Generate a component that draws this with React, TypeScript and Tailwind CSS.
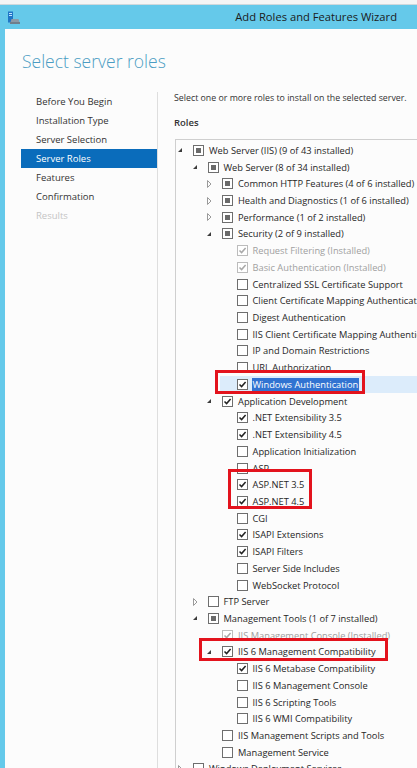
import React from 'react';

type Row = {
  t: string;
  l: number;
  e?: 'o' | 'c';
  s: 'i' | 'c' | 'd' | 'u';
  hl?: boolean;
};

const rows: Row[] = [
  { t: 'Web Server (IIS) (9 of 43 installed)', l: 0, e: 'o', s: 'i' },
  { t: 'Web Server (8 of 34 installed)', l: 1, e: 'o', s: 'i' },
  { t: 'Common HTTP Features (4 of 6 installed)', l: 2, e: 'c', s: 'i' },
  { t: 'Health and Diagnostics (1 of 6 installed)', l: 2, e: 'c', s: 'i' },
  { t: 'Performance (1 of 2 installed)', l: 2, e: 'c', s: 'i' },
  { t: 'Security (2 of 9 installed)', l: 2, e: 'o', s: 'i' },
  { t: 'Request Filtering (Installed)', l: 3, s: 'd' },
  { t: 'Basic Authentication (Installed)', l: 3, s: 'd' },
  { t: 'Centralized SSL Certificate Support', l: 3, s: 'u' },
  { t: 'Client Certificate Mapping Authentication', l: 3, s: 'u' },
  { t: 'Digest Authentication', l: 3, s: 'u' },
  { t: 'IIS Client Certificate Mapping Authentication', l: 3, s: 'u' },
  { t: 'IP and Domain Restrictions', l: 3, s: 'u' },
  { t: 'URL Authorization', l: 3, s: 'u' },
  { t: 'Windows Authentication', l: 3, s: 'c', hl: true },
  { t: 'Application Development', l: 2, e: 'o', s: 'c' },
  { t: '.NET Extensibility 3.5', l: 3, s: 'c' },
  { t: '.NET Extensibility 4.5', l: 3, s: 'c' },
  { t: 'Application Initialization', l: 3, s: 'u' },
  { t: 'ASP', l: 3, s: 'u' },
  { t: 'ASP.NET 3.5', l: 3, s: 'c' },
  { t: 'ASP.NET 4.5', l: 3, s: 'c' },
  { t: 'CGI', l: 3, s: 'u' },
  { t: 'ISAPI Extensions', l: 3, s: 'c' },
  { t: 'ISAPI Filters', l: 3, s: 'c' },
  { t: 'Server Side Includes', l: 3, s: 'u' },
  { t: 'WebSocket Protocol', l: 3, s: 'u' },
  { t: 'FTP Server', l: 1, e: 'c', s: 'u' },
  { t: 'Management Tools (1 of 7 installed)', l: 1, e: 'o', s: 'i' },
  { t: 'IIS Management Console (Installed)', l: 2, s: 'd' },
  { t: 'IIS 6 Management Compatibility', l: 2, e: 'o', s: 'c' },
  { t: 'IIS 6 Metabase Compatibility', l: 3, s: 'c' },
  { t: 'IIS 6 Management Console', l: 3, s: 'u' },
  { t: 'IIS 6 Scripting Tools', l: 3, s: 'u' },
  { t: 'IIS 6 WMI Compatibility', l: 3, s: 'u' },
  { t: 'IIS Management Scripts and Tools', l: 2, s: 'u' },
  { t: 'Management Service', l: 2, s: 'u' },
  { t: 'Windows Deployment Services', l: 0, e: 'c', s: 'u' },
];

const nav = [
  'Before You Begin',
  'Installation Type',
  'Server Selection',
  'Server Roles',
  'Features',
  'Confirmation',
  'Results',
];

function Expander({ e }: { e?: 'o' | 'c' }) {
  return (
    <div className="w-[13px] h-full flex items-center pl-[1px] shrink-0">
      {e === 'o' && (
        <svg width="6" height="6" viewBox="0 0 6 6">
          <path d="M5 1 L5 5 L1 5 Z" fill="#3c3c3c" />
        </svg>
      )}
      {e === 'c' && (
        <svg width="6" height="8" viewBox="0 0 6 8">
          <path d="M1.5 0.5 L5 4 L1.5 7.5 Z" fill="none" stroke="#9a9a9a" strokeWidth="1" />
        </svg>
      )}
    </div>
  );
}

function Check({ s }: { s: Row['s'] }) {
  const dis = s === 'd';
  return (
    <div
      className={
        'w-[11px] h-[11px] border bg-white flex items-center justify-center shrink-0 ' +
        (dis ? 'border-[#bcbcbc]' : 'border-[#6e6e6e]')
      }
    >
      {s === 'i' && <div className="w-[5px] h-[5px] bg-[#6a6a6a]" />}
      {(s === 'c' || s === 'd') && (
        <svg width="9" height="9" viewBox="0 0 9 9">
          <path
            d="M1.5 4.5 L3.6 6.6 L7.6 2"
            fill="none"
            stroke={dis ? '#a8a8a8' : '#222'}
            strokeWidth="1.5"
          />
        </svg>
      )}
    </div>
  );
}

export default function App() {
  return (
    <div
      className="relative w-[417px] h-[768px] overflow-hidden bg-[#f3f3f3] text-[#262626]"
      style={{ fontFamily: '"Segoe UI", "Open Sans", sans-serif' }}
    >
      {/* strip above the window */}
      <div className="h-[5px] border-b border-[#cfd8dc] bg-[#f5f5f5]" />

      <div className="flex flex-col h-[763px] bg-[#65c9ea] pl-[5px]">
        {/* title bar */}
        <div className="h-[24px] flex items-center shrink-0">
          <svg width="14" height="14" viewBox="0 0 14 14" className="ml-[2px] mt-[1px]">
            <rect x="1" y="0.5" width="5" height="11" fill="#1f76c6" />
            <rect x="2" y="2" width="3" height="1" fill="#bfe3ff" />
            <rect x="2" y="4" width="3" height="1" fill="#bfe3ff" />
            <path d="M3 13 L4.5 8 L11.5 8 L13 13 Z" fill="#8c9aa6" />
            <rect x="3" y="11" width="10" height="2" fill="#6f7f8c" />
          </svg>
          <div className="flex-1" />
          <span className="text-[11.2px] text-[#1b1b1b] mr-[20px]">Add Roles and Features Wizard</span>
        </div>

        {/* content */}
        <div className="flex-1 bg-[#fcfcfc] flex flex-col overflow-hidden">
          <div className="pl-[17px] mt-[19px] h-[26px] text-[17.5px] leading-[26px] font-light text-[#4b9cc3]">
            Select server roles
          </div>

          <div className="flex flex-1 mt-[18px] text-[9.5px]">
            {/* wizard steps */}
            <div className="w-[153px] pl-[16px] border-r border-[#dedede] shrink-0">
              {nav.map((n, i) => (
                <div
                  key={n}
                  className={
                    'h-[19px] leading-[19px] pl-[15px] ' +
                    (i === 3
                      ? 'bg-[#0a6cbb] text-white'
                      : i === 6
                      ? 'text-[#c4c4c4]'
                      : 'text-[#333]')
                  }
                >
                  {n}
                </div>
              ))}
            </div>

            {/* roles pane */}
            <div className="flex-1 pl-[16px] flex flex-col min-w-0 overflow-hidden">
              <div className="h-[12px] leading-[12px] whitespace-nowrap text-[8.8px] text-[#333]">
                Select one or more roles to install on the selected server.
              </div>
              <div className="h-[12px] leading-[12px] mt-[13px] font-semibold text-[#333]">Roles</div>
              <div className="mt-[10px] ml-[1px] flex-1 border-l border-t border-[#cfcfcf] pt-[2px] text-[9.3px]">
                {rows.map((r, i) => (
                  <div
                    key={i}
                    className="h-[16.72px] flex whitespace-nowrap overflow-hidden"
                    style={{ paddingLeft: r.l * 14.5 }}
                  >
                    <div
                      className={
                        'flex-1 h-full flex items-center min-w-0 ' + (r.hl ? 'bg-[#dcecfb]' : '')
                      }
                    >
                      <Expander e={r.e} />
                      <div className="pl-[4px] flex items-center">
                        <Check s={r.s} />
                        <span
                          className={
                            'ml-[4px] leading-[13px] px-[1px] shrink-0 ' +
                            (r.hl
                              ? 'bg-[#3173d1] text-white'
                              : r.s === 'd'
                              ? 'text-[#a0a0a0]'
                              : 'text-[#262626]')
                          }
                        >
                          {r.t}
                        </span>
                      </div>
                    </div>
                  </div>
                ))}
              </div>
            </div>
          </div>
        </div>
      </div>

      {/* red annotation boxes */}
      <div className="absolute left-[215px] top-[370px] w-[150px] h-[24px] border-[3px] border-[#e3131d]" />
      <div className="absolute left-[228px] top-[469px] w-[84px] h-[40px] border-[3px] border-[#e3131d]" />
      <div className="absolute left-[199px] top-[638px] w-[189px] h-[23px] border-[3px] border-[#e3131d]" />
    </div>
  );
}
